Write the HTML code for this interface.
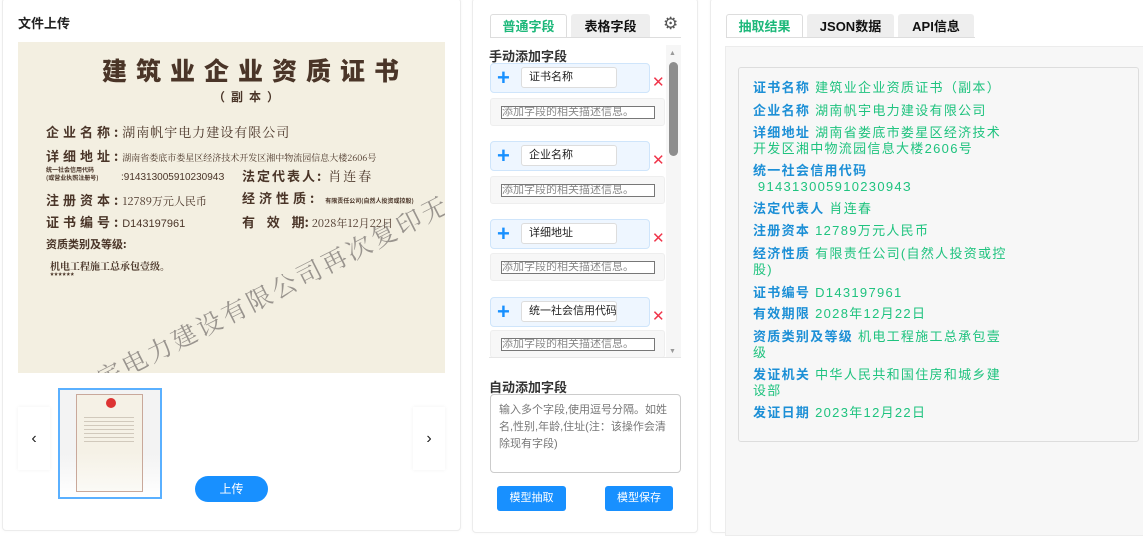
<!DOCTYPE html>
<html><head><meta charset="utf-8"><style>
*{box-sizing:border-box;margin:0;padding:0}
body{width:1143px;height:533px;background:#fff;font-family:"Liberation Sans","Noto Sans CJK SC",sans-serif;position:relative;overflow:hidden;color:#222}
.abs{position:absolute}
.card{position:absolute;background:#fff;border:1px solid #ececec;border-radius:4px;box-shadow:0 0 3px rgba(0,0,0,.04)}
.cert{left:18px;top:42px;width:427px;height:331px;background:#f3efe1;overflow:hidden;color:#4a3528;font-family:"Noto Sans CJK SC",sans-serif;font-weight:bold}
.cert .t{position:absolute;white-space:nowrap}
.cert .n{font-family:"Noto Serif CJK SC",serif;font-weight:normal}
.tab{position:absolute;top:14px;height:24px;font-size:13px;font-weight:bold;text-align:center;line-height:23px;border:1px solid #ddd;border-bottom:none;border-radius:3px 3px 0 0}
.act{background:#fff;color:#1db87a}
.ina{background:#eee;color:#111;border-color:#eee}
.frow{position:absolute;left:490px;width:160px;height:30px;background:#eef6ff;border:1px solid #cfe5fb;border-radius:4px}
.frow .p{position:absolute;left:6px;top:1px;color:#1890ff;font-size:22px;font-weight:bold;line-height:26px}
.frow .in{position:absolute;left:30px;top:3px;width:96px;height:21px;background:#fff;border:1px solid #ddd;border-radius:3px;font-size:11px;line-height:19px;padding-left:7px;overflow:hidden;white-space:nowrap}
.x{position:absolute;left:652px;color:#f0354a;font-size:15px}
.desc{position:absolute;left:490px;width:175px;height:28px;background:#f7f7f7;border:1px solid #eee;border-radius:3px}
.desc div{position:absolute;left:10px;top:7px;width:154px;height:13px;border:1px solid #777;font-size:11px;line-height:11px;color:#888;background:#fff;white-space:nowrap;overflow:hidden}
.btn{position:absolute;background:#1890ff;color:#fff;font-size:11px;text-align:center;border-radius:3px;line-height:25px}
.res{position:absolute;left:753px;width:262px;font-size:13px;line-height:16px;letter-spacing:1.3px;color:#1fc37f}
.res b{color:#1c8fd6}
</style></head><body>

<div class="card" style="left:2px;top:-2px;width:459px;height:533px"></div>
<div class="abs" style="left:18px;top:13px;font-size:13px;font-weight:bold">文件上传</div>
<div class="abs cert">
 <div class="t" style="left:84px;top:10px;font-size:25px;letter-spacing:9px;font-weight:900">建筑业企业资质证书</div>
 <div class="t" style="left:195px;top:46px;font-size:12px;letter-spacing:6px">（副本）</div>
 <div class="t" style="left:28px;top:80px;font-size:13px;letter-spacing:4px">企业名称:<span class="n" style="letter-spacing:1px">湖南帆宇电力建设有限公司</span></div>
 <div class="t" style="left:28px;top:104px;font-size:13px;letter-spacing:4px">详细地址:<span class="n" style="font-size:9px;letter-spacing:0">湖南省娄底市娄星区经济技术开发区湘中物流园信息大楼2606号</span></div>
 <div class="t" style="left:28px;top:124px;font-size:6px;line-height:8px">统一社会信用代码<br>(或营业执照注册号)</div>
 <div class="t" style="left:103px;top:130px;font-size:10px;font-weight:normal;font-family:'Liberation Sans',sans-serif">:91431300591023094З</div>
 <div class="t" style="left:224px;top:124px;font-size:13px;letter-spacing:2px">法定代表人: <span class="n">肖连春</span></div>
 <div class="t" style="left:28px;top:148px;font-size:13px;letter-spacing:4px">注册资本:<span class="n" style="font-size:11px;letter-spacing:0">12789万元人民币</span></div>
 <div class="t" style="left:224px;top:146px;font-size:13px;letter-spacing:4px">经济性质: <span style="font-size:6px;letter-spacing:0">有限责任公司(自然人投资或控股)</span></div>
 <div class="t" style="left:28px;top:170px;font-size:13px;letter-spacing:4px">证书编号:<span class="n" style="font-size:11px;letter-spacing:0;font-family:'Liberation Sans',sans-serif">D143197961</span></div>
 <div class="t" style="left:224px;top:170px;font-size:13px">有&nbsp;&nbsp;&nbsp;&nbsp;效&nbsp;&nbsp;&nbsp;&nbsp;期: <span class="n" style="font-size:11px">2028年12月22日</span></div>
 <div class="t" style="left:28px;top:194px;font-size:11px">资质类别及等级:</div>
 <div class="t n" style="left:32px;top:216px;font-size:10px;font-weight:bold">机电工程施工总承包壹级。</div>
 <div class="t" style="left:32px;top:229px;font-size:8px">******</div>
 <div class="t n" style="left:30px;top:345px;font-size:25px;color:#8a8580;transform:rotate(-27deg);transform-origin:0 50%;letter-spacing:3px;opacity:.85">南帆宇电力建设有限公司再次复印无效</div>
</div>
<div class="abs" style="left:18px;top:407px;width:32px;height:63px;background:#fff;box-shadow:0 0 4px rgba(0,0,0,.06);font-size:16px;text-align:center;line-height:63px">‹</div>
<div class="abs" style="left:413px;top:407px;width:32px;height:63px;background:#fff;box-shadow:0 0 4px rgba(0,0,0,.06);font-size:16px;text-align:center;line-height:63px">›</div>
<div class="abs" style="left:58px;top:388px;width:104px;height:111px;border:2px solid #5ab0ff;background:linear-gradient(#f3f3f3 60%,#fff)">
 <div class="abs" style="left:16px;top:4px;width:67px;height:98px;border:1px solid #c9a89a;background:linear-gradient(#f5f1e6 60%,#fbfaf6)"></div>
 <div class="abs" style="left:46px;top:8px;width:10px;height:10px;border-radius:50%;background:#d33"></div>
 <div class="abs" style="left:24px;top:24px;width:50px;height:30px;background:repeating-linear-gradient(#f5f1e6 0 3px,#b9aea0 3px 4px);opacity:.6"></div>
</div>
<div class="btn" style="left:195px;top:476px;width:73px;height:26px;border-radius:13px;font-size:12px;line-height:26px">上传</div>

<div class="card" style="left:472px;top:-2px;width:226px;height:535px"></div>
<div class="tab act" style="left:490px;width:77px">普通字段</div>
<div class="tab ina" style="left:571px;width:79px">表格字段</div>
<div class="abs" style="left:663px;top:14px;font-size:17px;color:#555">⚙</div>
<div class="abs" style="left:490px;top:37px;width:191px;height:1px;background:#ddd"></div>
<div class="abs" style="left:489px;top:46px;font-size:13px;font-weight:bold;color:#333">手动添加字段</div>
<div class="abs" style="left:666px;top:45px;width:15px;height:312px;background:#f6f6f6"></div>
<div class="abs" style="left:669px;top:62px;width:9px;height:94px;background:#8e8e8e;border-radius:5px"></div>
<div class="abs" style="left:669px;top:50px;font-size:7px;color:#999">▲</div>
<div class="abs" style="left:669px;top:348px;font-size:7px;color:#999">▼</div>
<div class="frow" style="top:63px"><span class="p">+</span><div class="in">证书名称</div></div><span class="x" style="top:73px">✕</span>
<div class="desc" style="top:98px"><div>添加字段的相关描述信息。</div></div>
<div class="frow" style="top:141px"><span class="p">+</span><div class="in">企业名称</div></div><span class="x" style="top:151px">✕</span>
<div class="desc" style="top:176px"><div>添加字段的相关描述信息。</div></div>
<div class="frow" style="top:219px"><span class="p">+</span><div class="in">详细地址</div></div><span class="x" style="top:229px">✕</span>
<div class="desc" style="top:253px"><div>添加字段的相关描述信息。</div></div>
<div class="frow" style="top:297px"><span class="p">+</span><div class="in">统一社会信用代码</div></div><span class="x" style="top:307px">✕</span>
<div class="desc" style="top:330px"><div>添加字段的相关描述信息。</div></div>
<div class="abs" style="left:489px;top:357px;width:192px;height:1px;background:#e6e6e6"></div>
<div class="abs" style="left:489px;top:377px;font-size:13px;font-weight:bold;color:#333">自动添加字段</div>
<div class="abs" style="left:490px;top:394px;width:191px;height:79px;border:1px solid #ccc;border-radius:4px;font-size:11px;line-height:17px;color:#777;padding:7px 8px">输入多个字段,使用逗号分隔。如姓名,性别,年龄,住址(注：该操作会清除现有字段)</div>
<div class="btn" style="left:497px;top:486px;width:69px;height:25px">模型抽取</div>
<div class="btn" style="left:605px;top:486px;width:68px;height:25px">模型保存</div>

<div class="card" style="left:710px;top:-2px;width:440px;height:535px"></div>
<div class="tab act" style="left:726px;width:77px">抽取结果</div>
<div class="tab ina" style="left:807px;width:87px">JSON数据</div>
<div class="tab ina" style="left:898px;width:76px">API信息</div>
<div class="abs" style="left:726px;top:37px;width:249px;height:1px;background:#ddd"></div>
<div class="abs" style="left:725px;top:46px;width:420px;height:490px;background:#f7f7f7;border:1px solid #ececec"></div>
<div class="abs" style="left:738px;top:67px;width:401px;height:375px;border:1px solid #ddd;border-radius:3px;background:#f7f7f7"></div>
<div class="res" style="top:80px"><b>证书名称</b> 建筑业企业资质证书（副本）</div>
<div class="res" style="top:103px"><b>企业名称</b> 湖南帆宇电力建设有限公司</div>
<div class="res" style="top:125px"><b>详细地址</b> 湖南省娄底市娄星区经济技术开发区湘中物流园信息大楼2606号</div>
<div class="res" style="top:163px"><b>统一社会信用代码</b><br>&nbsp;91431300591023094З</div>
<div class="res" style="top:201px"><b>法定代表人</b> 肖连春</div>
<div class="res" style="top:223px"><b>注册资本</b> 12789万元人民币</div>
<div class="res" style="top:246px"><b>经济性质</b> 有限责任公司(自然人投资或控股)</div>
<div class="res" style="top:285px"><b>证书编号</b> D143197961</div>
<div class="res" style="top:306px"><b>有效期限</b> 2028年12月22日</div>
<div class="res" style="top:329px"><b>资质类别及等级</b> 机电工程施工总承包壹级</div>
<div class="res" style="top:367px"><b>发证机关</b> 中华人民共和国住房和城乡建设部</div>
<div class="res" style="top:405px"><b>发证日期</b> 2023年12月22日</div>
</body></html>
